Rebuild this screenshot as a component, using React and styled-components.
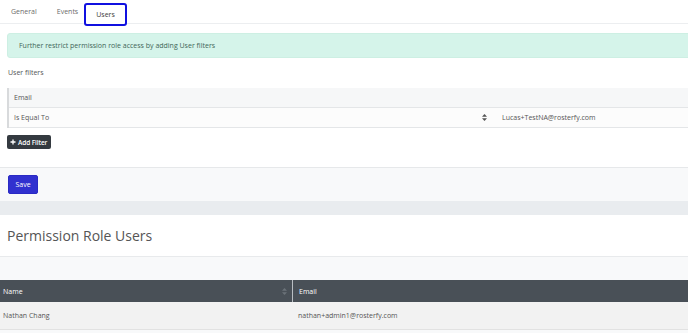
import React from 'react';
import styled, { createGlobalStyle } from 'styled-components';

const GlobalStyle = createGlobalStyle`
  html, body {
    margin: 0;
    padding: 0;
    background: #ffffff;
    overflow: hidden;
  }
  body {
    font-family: 'Open Sans', 'Noto Sans', sans-serif;
    color: #555;
  }
`;

const Page = styled.div`
  width: 688px;
  height: 333px;
  overflow: hidden;
  display: flex;
  flex-direction: column;
`;

const TabBar = styled.div`
  display: flex;
  align-items: flex-start;
  height: 23px;
  border-bottom: 1px solid #eceef0;
  padding-left: 1px;
`;

const Tab = styled.div`
  box-sizing: border-box;
  height: 23px;
  margin-top: ${(p) => (p.$active ? '3px' : '0')};
  margin-left: ${(p) => (p.$active ? '-4px' : '0')};
  padding: 0 10px;
  display: flex;
  align-items: center;
  font-size: 7px;
  color: ${(p) => (p.$active ? '#3a3a3a' : '#6c6c6c')};
  border: ${(p) => (p.$active ? '2.5px solid #1010e0' : 'none')};
  border-radius: 3px;
  background: #fff;
  position: relative;
  z-index: 1;
`;

const FormBody = styled.div`
  padding: 9px 0 17px 7px;
  background: #fff;
`;

const Alert = styled.div`
  height: 25px;
  margin-right: -8px;
  display: flex;
  align-items: center;
  padding-left: 11px;
  background: #d5f4ea;
  border: 1px solid #cdefe3;
  border-radius: 3px;
  font-size: 7px;
  color: #3f6658;
  box-sizing: border-box;
`;

const Label = styled.div`
  font-size: 7px;
  color: #555;
  margin: 10px 0 0 1px;
  height: 10px;
  line-height: 10px;
`;

const FilterTable = styled.div`
  margin-top: 10px;
  border-left: 2px solid #d8dadc;
`;

const FilterRow = styled.div`
  display: grid;
  grid-template-columns: 476px 1fr;
  align-items: center;
  height: 19px;
  padding-left: 5px;
  font-size: 7px;
  color: #555;
  background: ${(p) => (p.$head ? '#f6f7f8' : '#fcfcfc')};
  border-bottom: 1px solid #e4e6e8;
`;

const SelectCell = styled.div`
  display: flex;
  align-items: center;
  justify-content: space-between;
  padding-right: 3px;
`;

const ValueCell = styled.div`
  padding-left: 12px;
  color: #555;
`;

const SortIcon = styled.svg`
  width: 5px;
  height: 7px;
  display: block;
`;

const DarkButton = styled.button`
  margin-top: 6px;
  height: 14px;
  padding: 0 4px 0 3px;
  display: inline-flex;
  align-items: center;
  gap: 2px;
  background: #343a40;
  border: none;
  border-radius: 2px;
  color: #fff;
  font-family: inherit;
  font-size: 6.5px;
  font-weight: 600;
  letter-spacing: -0.1px;
`;

const FormFooter = styled.div`
  height: 34px;
  display: flex;
  align-items: center;
  padding-left: 8px;
  box-sizing: border-box;
  background: #f8f9fa;
  border-top: 1px solid #e6e8ea;
`;

const PrimaryButton = styled.button`
  width: 30px;
  height: 19px;
  padding: 0;
  background: #3131cf;
  border: 1px solid #2a2ac4;
  border-radius: 2px;
  color: #fff;
  font-family: inherit;
  font-size: 7px;
`;

const Band = styled.div`
  height: 14px;
  background: #e9ecef;
`;

const CardHeader = styled.div`
  height: 41px;
  display: flex;
  align-items: center;
  padding-left: 7px;
  font-size: 14px;
  color: #555;
  background: #fff;
  border-bottom: 1px solid #e8eaec;
`;

const CardBody = styled.div`
  flex: 1;
  padding-top: 23px;
  background: #f8f9fa;
`;

const Table = styled.div`
  font-size: 7px;
`;

const HeadRow = styled.div`
  display: grid;
  grid-template-columns: 292px 1fr;
  height: 22px;
  background: #495057;
  color: #fff;
`;

const HeadCell = styled.div`
  display: flex;
  align-items: center;
  justify-content: space-between;
  padding-right: 5px;
  border-left: ${(p) => (p.$divider ? '1px solid #b9bec3' : 'none')};
  padding-left: ${(p) => (p.$divider ? '6px' : '3px')};
`;

const BodyRow = styled.div`
  display: grid;
  grid-template-columns: 297px 1fr;
  height: 27px;
  align-items: center;
  background: #f2f2f2;
  border-bottom: 1px solid #e2e2e2;
  color: #555;
`;

const BodyCell = styled.div`
  padding-left: ${(p) => (p.$first ? '3px' : '1px')};
`;

function Sort({ color = '#555' }) {
  return (
    <SortIcon viewBox="0 0 5 7">
      <path d="M2.5 0 L5 2.8 L0 2.8 Z" fill={color} />
      <path d="M2.5 7 L5 4.2 L0 4.2 Z" fill={color} />
    </SortIcon>
  );
}

export default function App() {
  return (
    <Page>
      <GlobalStyle />
      <TabBar>
        <Tab>General</Tab>
        <Tab>Events</Tab>
        <Tab $active>Users</Tab>
      </TabBar>
      <FormBody>
        <Alert>Further restrict permission role access by adding User filters</Alert>
        <Label>User filters</Label>
        <FilterTable>
          <FilterRow $head>
            <span>Email</span>
          </FilterRow>
          <FilterRow>
            <SelectCell>
              <span>Is Equal To</span>
              <Sort />
            </SelectCell>
            <ValueCell>Lucas+TestNA@rosterfy.com</ValueCell>
          </FilterRow>
        </FilterTable>
        <DarkButton>
          <svg width="6" height="6" viewBox="0 0 6 6">
            <path d="M3 0.5 V5.5 M0.5 3 H5.5" stroke="#fff" strokeWidth="1.3" />
          </svg>
          Add Filter
        </DarkButton>
      </FormBody>
      <FormFooter>
        <PrimaryButton>Save</PrimaryButton>
      </FormFooter>
      <Band />
      <CardHeader>Permission Role Users</CardHeader>
      <CardBody>
        <Table>
          <HeadRow>
            <HeadCell>
              <span>Name</span>
              <Sort color="#6b7278" />
            </HeadCell>
            <HeadCell $divider>
              <span>Email</span>
            </HeadCell>
          </HeadRow>
          <BodyRow>
            <BodyCell $first>Nathan Chang</BodyCell>
            <BodyCell>nathan+admin1@rosterfy.com</BodyCell>
          </BodyRow>
        </Table>
      </CardBody>
    </Page>
  );
}
